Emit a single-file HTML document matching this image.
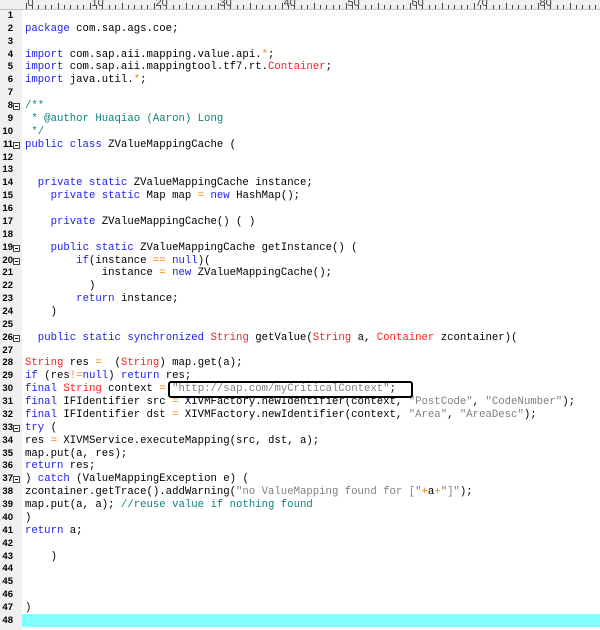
<!DOCTYPE html>
<html><head><style>
body{margin:0;width:600px;height:630px;background:#fff;overflow:hidden;position:relative;font-family:"Liberation Mono",monospace;}
#ruler{position:absolute;left:0;top:0;width:600px;height:9px;background:#f0f0f0;border-bottom:1px solid #c0c0c0;}
#gut{position:absolute;left:0;top:10px;width:22px;height:620px;background:#f0f0f0;}
.ln{position:absolute;left:0;width:13px;text-align:right;font-size:9.5px;font-weight:bold;color:#000;line-height:12.87px;font-family:"Liberation Sans",sans-serif;}
.fold{position:absolute;left:13px;width:7px;height:7px;border:1px solid #444;background:#fff;box-sizing:border-box;}
.fold:after{content:"";position:absolute;left:1px;top:2px;width:3px;height:1px;background:#000;}
.code{position:absolute;left:25px;font-size:10.67px;line-height:12.87px;white-space:pre;color:#000;}
.k{color:#2020f0}.r{color:#ff2020}.o{color:#ff8000}.c{color:#108080}.s{color:#808080}
#hl{position:absolute;left:22px;top:614px;width:578px;height:13px;background:#80ffff;}
#box{position:absolute;left:168px;top:381px;width:241px;height:13px;border:2px solid #000;border-radius:3px;}
.tick{position:absolute;top:5px;width:1px;height:4px;background:#444;}
.rn{position:absolute;top:-3px;font-size:11px;color:#444;font-family:"Liberation Sans",sans-serif;}
</style></head><body>
<div id="ruler"></div>
<div id="gut"></div>
<div id="hl"></div>
<div id="lines"></div>
<div id="box"></div>
<script>
var r=document.getElementById('ruler'),h='';
for(var i=0;i<94;i++){var x=25.5+i*6.4;h+='<div class="tick" style="left:'+x+'px;'+(i%5==0?'top:3px;height:6px':'')+'"></div>';if(i%10==0)h+='<div class="rn" style="left:'+(x+2)+'px">'+i+'</div>';}
r.innerHTML=h;
var L=['','<span class="k">package</span> com.sap.ags.coe;','',
'<span class="k">import</span> com.sap.aii.mapping.value.api.<span class="o">*</span>;',
'<span class="k">import</span> com.sap.aii.mappingtool.tf7.rt.<span class="r">Container</span>;',
'<span class="k">import</span> java.util.<span class="o">*</span>;','',
'<span class="c">/**</span>','<span class="c"> * @author Huaqiao (Aaron) Long</span>','<span class="c"> */</span>',
'<span class="k">public class</span> ZValueMappingCache (','','',
'  <span class="k">private static</span> ZValueMappingCache instance;',
'    <span class="k">private static</span> Map map <span class="o">=</span> <span class="k">new</span> HashMap();','',
'    <span class="k">private</span> ZValueMappingCache() ( )','',
'    <span class="k">public static</span> ZValueMappingCache getInstance() (',
'        <span class="k">if</span>(instance <span class="o">==</span> <span class="k">null</span>)(',
'            instance <span class="o">=</span> <span class="k">new</span> ZValueMappingCache();',
'          )','        <span class="k">return</span> instance;','    )','',
'  <span class="k">public static synchronized</span> <span class="r">String</span> getValue(<span class="r">String</span> a, <span class="r">Container</span> zcontainer)(','',
'<span class="r">String</span> res <span class="o">=</span>  (<span class="r">String</span>) map.get(a);',
'<span class="k">if</span> (res<span class="o">!=</span><span class="k">null</span>) <span class="k">return</span> res;',
'<span class="k">final</span> <span class="r">String</span> context <span class="o">=</span> <span class="s">"http://sap.com/myCriticalContext"</span>;',
'<span class="k">final</span> IFIdentifier src <span class="o">=</span> XIVMFactory.newIdentifier(context, <span class="s">"PostCode"</span>, <span class="s">"CodeNumber"</span>);',
'<span class="k">final</span> IFIdentifier dst <span class="o">=</span> XIVMFactory.newIdentifier(context, <span class="s">"Area"</span>, <span class="s">"AreaDesc"</span>);',
'<span class="k">try</span> (','res <span class="o">=</span> XIVMService.executeMapping(src, dst, a);','map.put(a, res);','<span class="k">return</span> res;',
') <span class="k">catch</span> (ValueMappingException e) (',
'zcontainer.getTrace().addWarning(<span class="s">"no ValueMapping found for ["</span><span class="o">+</span>a<span class="o">+</span><span class="s">"]"</span>);',
'map.put(a, a); <span class="c">//reuse value if nothing found</span>',')','<span class="k">return</span> a;','','    )','','','',')',''];
var folds=[8,11,19,20,26,33,37];
var o='';
for(var i=0;i<48;i++){var y=10+i*12.87;
o+='<div class="ln" style="top:'+y+'px">'+(i+1)+'</div>';
o+='<div class="code" style="top:'+y+'px">'+L[i]+'</div>';
if(folds.indexOf(i+1)>=0)o+='<div class="fold" style="top:'+(y+3)+'px"></div>';}
document.getElementById('lines').innerHTML=o;
</script>
</body></html>
